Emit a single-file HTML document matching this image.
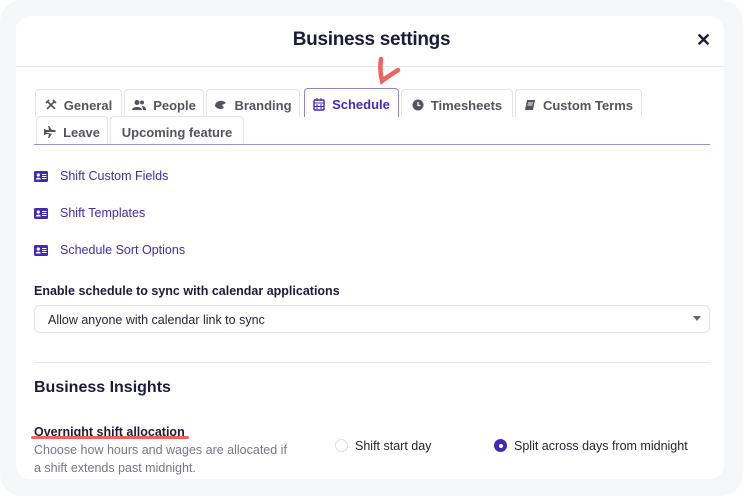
<!DOCTYPE html>
<html><head><style>
*{margin:0;padding:0;box-sizing:border-box}
body{width:743px;height:496px;background:#fff;font-family:"Liberation Sans",sans-serif;position:relative;overflow:hidden}
.frame{position:absolute;left:0;top:0;width:743px;height:496px;background:#f6f7f9;border-radius:22px}
.card{position:absolute;left:16px;top:16px;width:708px;height:463px;background:#fff;border-radius:14px}
.a{position:absolute;white-space:nowrap}
.tab{position:absolute;height:28px;border:1px solid #e4e4e8;border-bottom:none;border-radius:4px 4px 0 0;font-size:13px;font-weight:bold;color:#55535f;padding:8px 0 0 0;display:flex;align-items:flex-start;justify-content:center;gap:7px;background:#fff}
.tab svg{margin-top:1px}
.link{position:absolute;left:34px;font-size:12.5px;color:#3f2bb8;display:flex;align-items:center;gap:12px}
</style></head><body>
<div class="frame"></div>
<div class="card"></div>
<div class="a" style="left:0;width:743px;top:29px;text-align:center;font-size:19px;font-weight:bold;color:#1d1b3a;letter-spacing:-0.3px">Business settings</div>
<div class="a" style="left:696px;top:30px;font-size:18px;font-weight:bold;color:#1d1b3a">✕</div>
<div class="a" style="left:16px;top:66px;width:708px;height:1px;background:#e8e8ec"></div>
<svg class="a" style="left:374px;top:56px" width="28" height="30"><path d="M7 3 C6 10 6 17 8 25 C13 21 18 18 24 14" stroke="#f0625c" stroke-width="4.5" fill="none" stroke-linecap="round"/></svg>

<div class="tab" style="left:35px;top:89px;width:87px"><svg width="12" height="12"><path d="M2 2l8 8M10 2l-8 8M1 4l3-3M8 1l3 3" stroke="#55535f" stroke-width="1.6"/></svg>General</div>
<div class="tab" style="left:124px;top:89px;width:80px"><svg width="14" height="12"><circle cx="5" cy="3.5" r="2.5" fill="#55535f"/><path d="M0 11c0-4 10-4 10 0z" fill="#55535f"/><circle cx="10" cy="3.5" r="2" fill="#55535f"/><path d="M10 7c3 0 4 2 4 4h-3z" fill="#55535f"/></svg>People</div>
<div class="tab" style="left:206px;top:89px;width:94px"><svg width="13" height="12"><path d="M1 7a6 5 0 0 1 11-3l-4 2 2 3a6 5 0 0 1-9-2z" fill="#55535f"/></svg>Branding</div>
<div class="tab" style="left:304px;top:88px;width:95px;height:29px;border-color:#8f80e0;color:#3f2bb8;z-index:2"><svg width="12" height="13"><rect x="1" y="2" width="10" height="10" rx="1" fill="none" stroke="#3f2bb8" stroke-width="1.4"/><path d="M1 5h10M4 0v3M8 0v3M4 6v5M8 6v5M1 8.5h10" stroke="#3f2bb8" stroke-width="1"/></svg>Schedule</div>
<div class="tab" style="left:401px;top:89px;width:112px"><svg width="12" height="12"><circle cx="6" cy="6" r="5.5" fill="#55535f"/><path d="M6 3v3.5h2.5" stroke="#fff" stroke-width="1.3" fill="none"/></svg>Timesheets</div>
<div class="tab" style="left:515px;top:89px;width:127px"><svg width="12" height="12"><path d="M3 1h8l-2 10H1z" fill="#55535f"/><path d="M4 4h5M3.5 6h5" stroke="#fff" stroke-width="1"/></svg>Custom Terms</div>
<div class="tab" style="left:36px;top:116px;width:72px"><svg width="12" height="12"><path d="M1 6h10l1-1-1-1H8L5 0H4l1 4H2L1 3H0v6h1l1-1h3l-1 4h1l3-4z" fill="#55535f"/></svg>Leave</div>
<div class="tab" style="left:110px;top:116px;width:134px">Upcoming feature</div>
<div class="a" style="left:34px;top:144px;width:676px;height:1px;background:#9a8ce0"></div>

<div class="link" style="top:169px"><svg width="14" height="11"><rect width="14" height="11" rx="1.5" fill="#3f2bb8"/><circle cx="4.3" cy="4" r="1.6" fill="#fff"/><path d="M1.8 8.5c0-2.5 5-2.5 5 0z" fill="#fff"/><path d="M8 3.5h4.5M8 5.5h4.5M8 7.5h4.5" stroke="#fff" stroke-width="1"/></svg>Shift Custom Fields</div>
<div class="link" style="top:206px"><svg width="14" height="11"><rect width="14" height="11" rx="1.5" fill="#3f2bb8"/><circle cx="4.3" cy="4" r="1.6" fill="#fff"/><path d="M1.8 8.5c0-2.5 5-2.5 5 0z" fill="#fff"/><path d="M8 3.5h4.5M8 5.5h4.5M8 7.5h4.5" stroke="#fff" stroke-width="1"/></svg>Shift Templates</div>
<div class="link" style="top:243px"><svg width="14" height="11"><rect width="14" height="11" rx="1.5" fill="#3f2bb8"/><circle cx="4.3" cy="4" r="1.6" fill="#fff"/><path d="M1.8 8.5c0-2.5 5-2.5 5 0z" fill="#fff"/><path d="M8 3.5h4.5M8 5.5h4.5M8 7.5h4.5" stroke="#fff" stroke-width="1"/></svg>Schedule Sort Options</div>

<div class="a" style="left:34px;top:284px;font-size:12.5px;font-weight:bold;color:#1d1b3a">Enable schedule to sync with calendar applications</div>
<div class="a" style="left:34px;top:305px;width:676px;height:28px;border:1px solid #e2e2e8;border-radius:6px"></div>
<div class="a" style="left:48px;top:313px;font-size:12.5px;color:#26243a">Allow anyone with calendar link to sync</div>
<div class="a" style="left:693px;top:316px;width:0;height:0;border-left:4px solid transparent;border-right:4px solid transparent;border-top:5px solid #666"></div>
<div class="a" style="left:34px;top:362px;width:676px;height:1px;background:#e8e8ec"></div>
<div class="a" style="left:34px;top:379px;font-size:16px;font-weight:bold;color:#1d1b3a">Business Insights</div>

<div class="a" style="left:34px;top:425px;font-size:12.5px;font-weight:bold;color:#1d1b3a">Overnight shift allocation</div>
<div class="a" style="left:31px;top:436px;width:158px;height:3px;background:#f0625c;border-radius:2px"></div>
<div class="a" style="left:34px;top:441px;font-size:12.5px;color:#777685;line-height:18px">Choose how hours and wages are allocated if<br>a shift extends past midnight.</div>
<div class="a" style="left:335px;top:439px;width:13px;height:13px;border:1px solid #ddd;border-radius:50%"></div>
<div class="a" style="left:355px;top:439px;font-size:12.5px;color:#26243a">Shift start day</div>
<div class="a" style="left:494px;top:439px;width:13px;height:13px;border-radius:50%;background:#3f2bb8"><div style="margin:4.5px;width:4px;height:4px;background:#fff;border-radius:50%"></div></div>
<div class="a" style="left:514px;top:439px;font-size:12.5px;color:#26243a">Split across days from midnight</div>
</body></html>
